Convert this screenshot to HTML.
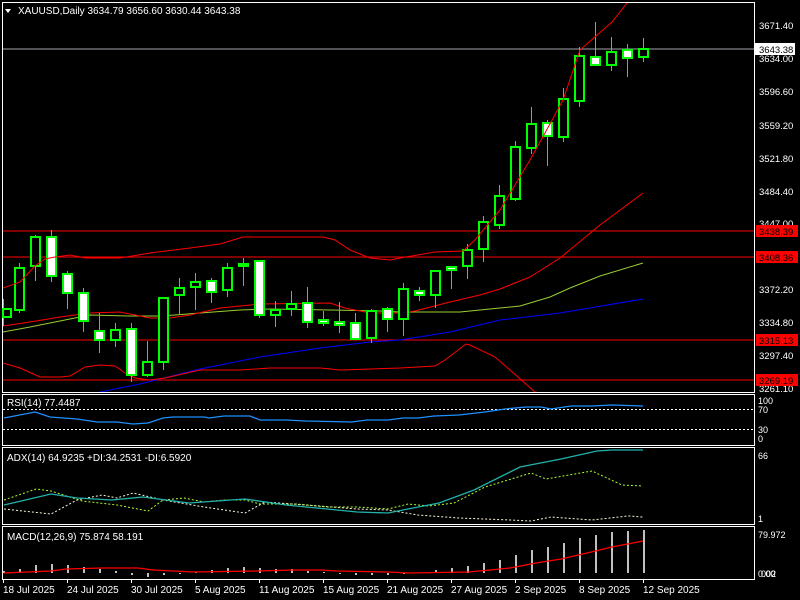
<!DOCTYPE html>
<html><head><meta charset="utf-8"><style>
html,body{margin:0;padding:0;background:#000;width:800px;height:600px;overflow:hidden}
svg{display:block}
text{font-family:"Liberation Sans",sans-serif;fill:#fff}
</style></head><body>
<svg width="800" height="600" viewBox="0 0 800 600" xmlns="http://www.w3.org/2000/svg">
<defs>
<clipPath id="cm"><rect x="3" y="3" width="751" height="389"/></clipPath>
</defs>
<rect width="800" height="600" fill="#000"/>
<!-- panel borders -->
<g fill="none" stroke="#fff" stroke-width="1">
<rect x="2.5" y="2.5" width="752" height="390"/>
<rect x="2.5" y="394.5" width="752" height="51"/>
<rect x="2.5" y="447.5" width="752" height="77"/>
<rect x="2.5" y="526.5" width="752" height="53"/>
</g>
<!-- horizontal lines -->
<line x1="3" y1="49" x2="754" y2="49" stroke="#a0a4ac" stroke-width="1"/>
<g stroke="#ff0000" stroke-width="1">
<line x1="3" y1="231" x2="754" y2="231"/>
<line x1="3" y1="257" x2="754" y2="257"/>
<line x1="3" y1="340" x2="754" y2="340"/>
<line x1="3" y1="380" x2="754" y2="380"/>
</g>
<g clip-path="url(#cm)">
<!-- blue MA -->
<polyline fill="none" stroke="#0000ff" stroke-width="1" points="100,392 140,384 200,369 260,357 320,348 370,342 400,340 450,332 500,320 560,313 643,299"/>
<!-- yellowgreen MA -->
<polyline fill="none" stroke="#9acd32" stroke-width="1" points="3,332 30,327 70,319 90,315 130,316 160,316 175,315 200,313 240,310 270,309 330,310 380,311 400,312 460,312 470,311 500,308 520,306 550,297 570,288 600,276 643,263"/>
<!-- middle red -->
<polyline fill="none" stroke="#ff0000" stroke-width="1" points="3,326 30,322 60,317 90,313 120,312 150,318 170,318 190,315 220,308 260,304 330,303 345,308 370,313 400,313 415,311 450,302 480,295 500,289 530,277 560,258 600,225 643,193"/>
<!-- lower red -->
<polyline fill="none" stroke="#ff0000" stroke-width="1" points="3,363 20,368 40,377 60,377 70,376 85,367 100,365 115,366 125,373 135,378 150,380 165,378 200,370 240,370 270,368 320,368 340,370 400,368 435,366 445,360 466,344 470,345 495,357 510,370 535,392"/>
</g>
<!-- candles -->
<g stroke="#00ff00">
<g stroke-width="1">
<line x1="3.5" y1="299" x2="3.5" y2="326"/><line x1="19.5" y1="263" x2="19.5" y2="313"/><line x1="35.5" y1="235" x2="35.5" y2="281"/><line x1="51.5" y1="230" x2="51.5" y2="282"/><line x1="67.5" y1="271" x2="67.5" y2="309"/><line x1="83.5" y1="288" x2="83.5" y2="332"/><line x1="99.5" y1="313" x2="99.5" y2="353"/><line x1="115.5" y1="323" x2="115.5" y2="347"/><line x1="131.5" y1="323" x2="131.5" y2="382"/><line x1="147.5" y1="341" x2="147.5" y2="377"/><line x1="163.5" y1="297" x2="163.5" y2="370"/><line x1="179.5" y1="278" x2="179.5" y2="314"/><line x1="195.5" y1="273" x2="195.5" y2="310"/><line x1="211.5" y1="278" x2="211.5" y2="303"/><line x1="227.5" y1="263" x2="227.5" y2="297"/><line x1="243.5" y1="258" x2="243.5" y2="286"/><line x1="259.5" y1="260" x2="259.5" y2="318"/><line x1="275.5" y1="301" x2="275.5" y2="327"/><line x1="291.5" y1="291" x2="291.5" y2="316"/><line x1="307.5" y1="287" x2="307.5" y2="328"/><line x1="323.5" y1="311" x2="323.5" y2="326"/><line x1="339.5" y1="302" x2="339.5" y2="333"/><line x1="355.5" y1="313" x2="355.5" y2="340"/><line x1="371.5" y1="309" x2="371.5" y2="343"/><line x1="387.5" y1="307" x2="387.5" y2="332"/><line x1="403.5" y1="283" x2="403.5" y2="336"/><line x1="419.5" y1="287" x2="419.5" y2="301"/><line x1="435.5" y1="270" x2="435.5" y2="308"/><line x1="451.5" y1="266" x2="451.5" y2="289"/><line x1="467.5" y1="244" x2="467.5" y2="279"/><line x1="483.5" y1="216" x2="483.5" y2="262"/><line x1="499.5" y1="185" x2="499.5" y2="229"/><line x1="515.5" y1="141" x2="515.5" y2="201"/><line x1="531.5" y1="107" x2="531.5" y2="154"/><line x1="547.5" y1="120" x2="547.5" y2="166"/><line x1="563.5" y1="88" x2="563.5" y2="142"/><line x1="579.5" y1="47" x2="579.5" y2="107"/><line x1="595.5" y1="22" x2="595.5" y2="65"/><line x1="611.5" y1="37" x2="611.5" y2="71"/><line x1="627.5" y1="44" x2="627.5" y2="77"/><line x1="643.5" y1="38" x2="643.5" y2="62"/>
</g>
<g stroke-width="2" fill="#000">
<rect x="3" y="309" width="8" height="8"/>
<rect x="15" y="268" width="9" height="42"/>
<rect x="31" y="237" width="9" height="29"/>
<rect x="111" y="330" width="9" height="10"/>
<rect x="143" y="362" width="9" height="13"/>
<rect x="159" y="298" width="9" height="64"/>
<rect x="175" y="288" width="9" height="7"/>
<rect x="191" y="282" width="9" height="5"/>
<rect x="223" y="268" width="9" height="22"/>
<rect x="271" y="310" width="9" height="5"/>
<rect x="287" y="304" width="9" height="5"/>
<rect x="367" y="311" width="9" height="27"/>
<rect x="399" y="289" width="9" height="30"/>
<rect x="431" y="271" width="9" height="24"/>
<rect x="463" y="250" width="9" height="16"/>
<rect x="479" y="222" width="9" height="27"/>
<rect x="495" y="196" width="9" height="29"/>
<rect x="511" y="147" width="9" height="52"/>
<rect x="527" y="124" width="9" height="24"/>
<rect x="559" y="99" width="9" height="38"/>
<rect x="575" y="56" width="9" height="45"/>
<rect x="607" y="52" width="9" height="13"/>
<rect x="639" y="49" width="9" height="8"/>
</g>
<g stroke-width="2" fill="#fff">
<rect x="47" y="237" width="9" height="39"/>
<rect x="63" y="274" width="9" height="19"/>
<rect x="79" y="293" width="9" height="28"/>
<rect x="95" y="331" width="9" height="9"/>
<rect x="127" y="329" width="9" height="46"/>
<rect x="207" y="281" width="9" height="11"/>
<rect x="239" y="264" width="9" height="2"/>
<rect x="255" y="261" width="9" height="54"/>
<rect x="303" y="303" width="9" height="19"/>
<rect x="319" y="320" width="9" height="3"/>
<rect x="335" y="322" width="9" height="3"/>
<rect x="351" y="323" width="9" height="16"/>
<rect x="383" y="309" width="9" height="10"/>
<rect x="415" y="291" width="9" height="4"/>
<rect x="447" y="267" width="9" height="3"/>
<rect x="543" y="123" width="9" height="13"/>
<rect x="591" y="57" width="9" height="8"/>
<rect x="623" y="50" width="9" height="8"/>
</g>
</g>
<!-- upper red band (over candles) -->
<polyline clip-path="url(#cm)" fill="none" stroke="#ff0000" stroke-width="1" points="3,288 20,282 35,266 45,259 55,257 70,255 85,258 120,258 150,253 190,248 220,244 243,237 323,237 335,240 350,250 360,254 370,258 390,260 400,258 435,252 463,251 475,240 500,210 515,185 530,160 545,133 563,100 580,50 612,22 627,3 635,-8"/>
<!-- title -->
<polygon points="5,9 11,9 8,13" fill="#fff"/>
<text x="18" y="14" font-size="10">XAUUSD,Daily  3634.79 3656.60 3630.44 3643.38</text>
<!-- price axis -->
<g font-size="9.5">
<text x="759" y="29">3671.40</text>
<text x="759" y="62">3634.00</text>
<text x="759" y="95">3596.60</text>
<text x="759" y="129">3559.20</text>
<text x="759" y="162">3521.80</text>
<text x="759" y="195">3484.40</text>
<text x="759" y="227">3447.00</text>
<text x="759" y="293">3372.20</text>
<text x="759" y="326">3334.80</text>
<text x="759" y="359">3297.40</text>
<text x="759" y="392">3261.10</text>
</g>
<g fill="#fff">
<rect x="755" y="43" width="40" height="12" fill="#fff"/>
</g>
<rect x="756" y="225" width="42" height="12" fill="#ff0000"/>
<rect x="756" y="251" width="42" height="12" fill="#ff0000"/>
<rect x="756" y="334" width="42" height="12" fill="#ff0000"/>
<rect x="756" y="374" width="42" height="12" fill="#ff0000"/>
<g font-size="9.5" style="fill:#000">
<text x="759" y="53" style="fill:#000">3643.38</text>
<text x="759" y="235" style="fill:#000">3438.39</text>
<text x="759" y="261" style="fill:#000">3408.36</text>
<text x="759" y="344" style="fill:#000">3315.13</text>
<text x="759" y="384" style="fill:#000">3269.19</text>
</g>
<!-- RSI -->
<g stroke="#fff" stroke-width="1" stroke-dasharray="2,2">
<line x1="3" y1="409.5" x2="754" y2="409.5"/>
<line x1="3" y1="429.5" x2="754" y2="429.5"/>
</g>
<polyline fill="none" stroke="#1e90ff" stroke-width="1.3" points="4,418 35,412 50,417 77,419 97,422 117,422 133,424 148,423 163,418 173,417 204,417 209,418 224,416 250,416 260,420 286,420 306,421 352,422 367,420 388,420 403,418 418,418 434,416 459,415 485,412 505,409 526,407 541,407 551,409 571,406 592,406 612,405 643,406"/>
<text x="7" y="406" font-size="10">RSI(14) 77.4487</text>
<g font-size="9">
<text x="758" y="404">100</text>
<text x="758" y="413">70</text>
<text x="758" y="433">30</text>
<text x="758" y="442">0</text>
</g>
<!-- ADX -->
<polyline fill="none" stroke="#fff5dc" stroke-width="1" stroke-dasharray="2,2" points="4,509 51,514 77,500 102,495 117,498 133,493 163,500 204,507 245,513 265,502 306,505 357,509 388,510 418,515 459,518 510,520 531,521 551,517 592,520 628,516 643,517"/>
<polyline fill="none" stroke="#adff2f" stroke-width="1" stroke-dasharray="2,2" points="4,500 36,489 51,491 82,501 117,505 148,511 163,500 184,498 204,502 224,500 245,500 260,504 296,504 327,507 357,507 388,509 408,504 429,506 454,503 485,487 531,473 546,479 592,471 622,485 643,486"/>
<polyline fill="none" stroke="#20b2aa" stroke-width="1.3" points="4,505 51,494 77,498 112,500 143,497 189,503 245,499 286,505 327,509 357,512 388,513 408,509 439,503 474,490 520,467 561,459 597,451 612,450 643,450"/>
<text x="7" y="461" font-size="10">ADX(14) 64.9235 +DI:34.2531 -DI:6.5920</text>
<g font-size="9">
<text x="758" y="459">66</text>
<text x="758" y="522">1</text>
</g>
<!-- MACD -->
<g fill="#c0c0c0">
<rect x="3" y="571" width="2" height="2"/><rect x="19" y="569" width="2" height="4"/><rect x="35" y="565" width="2" height="8"/><rect x="51" y="564" width="2" height="9"/><rect x="67" y="565" width="2" height="8"/><rect x="83" y="567" width="2" height="6"/><rect x="99" y="569" width="2" height="4"/><rect x="115" y="571" width="2" height="2"/><rect x="131" y="573" width="2" height="2"/><rect x="147" y="573" width="2" height="4"/><rect x="163" y="573" width="2" height="2"/><rect x="179" y="573" width="2" height="1"/><rect x="195" y="572" width="2" height="1"/><rect x="211" y="570" width="2" height="3"/><rect x="227" y="568" width="2" height="5"/><rect x="243" y="567" width="2" height="6"/><rect x="259" y="568" width="2" height="5"/><rect x="275" y="569" width="2" height="4"/><rect x="291" y="569" width="2" height="4"/><rect x="307" y="571" width="2" height="2"/><rect x="323" y="572" width="2" height="1"/><rect x="339" y="573" width="2" height="1"/><rect x="355" y="573" width="2" height="2"/><rect x="371" y="573" width="2" height="2"/><rect x="387" y="573" width="2" height="2"/><rect x="403" y="573" width="2" height="1"/><rect x="435" y="570" width="2" height="3"/><rect x="451" y="568" width="2" height="5"/><rect x="467" y="566" width="2" height="7"/><rect x="483" y="563" width="2" height="10"/><rect x="499" y="560" width="2" height="13"/><rect x="515" y="555" width="2" height="18"/><rect x="531" y="550" width="2" height="23"/><rect x="547" y="547" width="2" height="26"/><rect x="563" y="543" width="2" height="30"/><rect x="579" y="538" width="2" height="35"/><rect x="595" y="535" width="2" height="38"/><rect x="611" y="532" width="2" height="41"/><rect x="627" y="531" width="2" height="42"/><rect x="643" y="530" width="2" height="43"/>
</g>
<polyline fill="none" stroke="#ff0000" stroke-width="1.3" points="4,573 51,571 66,569 102,568 138,568 153,570 194,572 255,571 296,570 321,570 337,571 388,572 408,573 469,572 510,568 536,563 561,559 587,553 612,547 643,541"/>
<text x="7" y="540" font-size="10">MACD(12,26,9) 75.874 58.191</text>
<g font-size="9">
<text x="758" y="538">79.972</text>
<text x="758" y="577">0.00</text>
<text x="761" y="577">002</text>
</g>
<!-- date axis -->
<g stroke="#fff" stroke-width="1">
<line x1="3.5" y1="580" x2="3.5" y2="583"/><line x1="67.5" y1="580" x2="67.5" y2="583"/><line x1="131.5" y1="580" x2="131.5" y2="583"/><line x1="195.5" y1="580" x2="195.5" y2="583"/><line x1="259.5" y1="580" x2="259.5" y2="583"/><line x1="323.5" y1="580" x2="323.5" y2="583"/><line x1="387.5" y1="580" x2="387.5" y2="583"/><line x1="451.5" y1="580" x2="451.5" y2="583"/><line x1="515.5" y1="580" x2="515.5" y2="583"/><line x1="579.5" y1="580" x2="579.5" y2="583"/><line x1="643.5" y1="580" x2="643.5" y2="583"/>
</g>
<g font-size="10">
<text x="3" y="593">18 Jul 2025</text>
<text x="67" y="593">24 Jul 2025</text>
<text x="131" y="593">30 Jul 2025</text>
<text x="195" y="593">5 Aug 2025</text>
<text x="259" y="593">11 Aug 2025</text>
<text x="323" y="593">15 Aug 2025</text>
<text x="387" y="593">21 Aug 2025</text>
<text x="451" y="593">27 Aug 2025</text>
<text x="515" y="593">2 Sep 2025</text>
<text x="579" y="593">8 Sep 2025</text>
<text x="643" y="593">12 Sep 2025</text>
</g>
</svg>
</body></html>
